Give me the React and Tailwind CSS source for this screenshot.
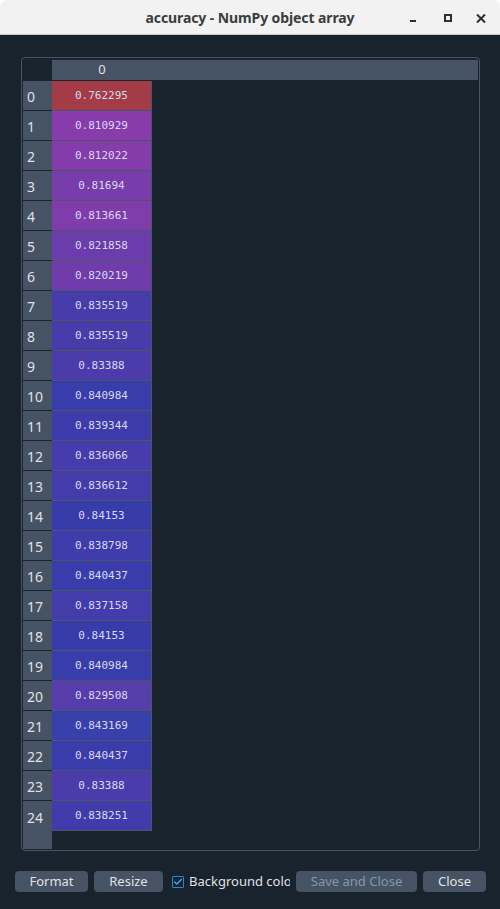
import { Check } from 'lucide-react'

const rows = [
  { value: '0.762295', bg: 'bg-[#a33c46]' },
  { value: '0.810929', bg: 'bg-[#883cab]' },
  { value: '0.812022', bg: 'bg-[#853cab]' },
  { value: '0.81694',  bg: 'bg-[#783cab]' },
  { value: '0.813661', bg: 'bg-[#813cab]' },
  { value: '0.821858', bg: 'bg-[#6b3cab]' },
  { value: '0.820219', bg: 'bg-[#703cab]' },
  { value: '0.835519', bg: 'bg-[#483cab]' },
  { value: '0.835519', bg: 'bg-[#483cab]' },
  { value: '0.83388',  bg: 'bg-[#4c3cab]' },
  { value: '0.840984', bg: 'bg-[#393cab]' },
  { value: '0.839344', bg: 'bg-[#3e3cab]' },
  { value: '0.836066', bg: 'bg-[#463cab]' },
  { value: '0.836612', bg: 'bg-[#453cab]' },
  { value: '0.84153',  bg: 'bg-[#383cab]' },
  { value: '0.838798', bg: 'bg-[#3f3cab]' },
  { value: '0.840437', bg: 'bg-[#3b3cab]' },
  { value: '0.837158', bg: 'bg-[#433cab]' },
  { value: '0.84153',  bg: 'bg-[#383cab]' },
  { value: '0.840984', bg: 'bg-[#393cab]' },
  { value: '0.829508', bg: 'bg-[#573cab]' },
  { value: '0.843169', bg: 'bg-[#3840ab]' },
  { value: '0.840437', bg: 'bg-[#3b3cab]' },
  { value: '0.83388',  bg: 'bg-[#4c3cab]' },
  { value: '0.838251', bg: 'bg-[#403cab]' },
]

function TitleBar() {
  return (
    <div className="relative h-[35px] bg-[#f2f2f2] rounded-t-[7px] border-b border-[#c9c9c6] flex items-center justify-center">
      <span className="text-[14px] font-bold text-[#3c3c3c] tracking-[-0.1px]">accuracy - NumPy object array</span>
      {/* window controls */}
      <div className="absolute right-[14px] top-[14px] flex items-start text-[#2e2e2e]">
        <svg width="6" height="10" viewBox="0 0 6 10" className="mr-[28px]">
          <rect x="0" y="6" width="6" height="2" fill="currentColor" />
        </svg>
        <svg width="8" height="8" viewBox="0 0 8 8" className="mr-[24px]">
          <rect x="1" y="1" width="6" height="6" fill="none" stroke="currentColor" strokeWidth="2" />
        </svg>
        <svg width="10" height="9" viewBox="0 0 10 9">
          <path d="M1 0.5 L9 8.5 M9 0.5 L1 8.5" stroke="currentColor" strokeWidth="2" />
        </svg>
      </div>
    </div>
  )
}

function Btn({ children, w, disabled }) {
  return (
    <button
      className={`${w} h-[21px] rounded-[4px] bg-[#455364] text-[13px] leading-none shrink-0 ${
        disabled ? 'text-[#8797a6]' : 'text-[#e0e1e3]'
      }`}
    >
      {children}
    </button>
  )
}

export default function App() {
  return (
    <div className="w-[500px] h-[909px] flex flex-col bg-white font-['Noto_Sans',sans-serif]">
      <TitleBar />

      <div className="flex-1 bg-[#19232d] flex flex-col">
        {/* Table frame */}
        <div className="ml-[21px] mr-[20px] mt-[22px] h-[794px] border border-[#455364] rounded-[4px] pt-[2px] px-[1px] pb-[1px] flex">
          {/* row headers */}
          <div className="w-[29px] flex flex-col">
            <div className="h-[21px] shrink-0" />
            {rows.map((r, i) => (
              <div
                key={i}
                className={`h-[30px] shrink-0 bg-[#455364] pl-[4px] pt-[2px] flex items-center text-[14px] text-[#e0e1e3] ${
                  i < rows.length - 1 ? 'border-b border-[#19232d]' : ''
                }`}
              >
                {i}
              </div>
            ))}
            <div className="flex-1 bg-[#455364]" />
          </div>

          {/* data column */}
          <div className="flex-1 flex flex-col">
            <div className="h-[20px] bg-[#455364] flex items-center">
              <span className="w-[100px] text-center text-[13px] text-[#e0e1e3]">0</span>
            </div>
            <div className="h-[1px]" />
            {rows.map((r, i) => (
              <div key={i} className={`w-[100px] h-[30px] shrink-0 ${r.bg} border-b border-r border-[#4b5563] flex justify-center pt-[7px] font-['DejaVu_Sans_Mono',monospace] text-[11px] text-[#d6daf2]`}>
                {r.value}
              </div>
            ))}
          </div>
        </div>

        {/* Bottom buttons */}
        <div className="mt-[20px] pl-[15px] flex items-center">
          <Btn w="w-[73px]">Format</Btn>
          <div className="w-[6px]" />
          <Btn w="w-[69px]">Resize</Btn>
          <div className="w-[9px]" />
          {/* label is clipped by its box, as in the original dialog */}
          <div className="w-[118px] shrink-0 flex items-center overflow-hidden whitespace-nowrap">
            <span className="w-[12px] h-[12px] shrink-0 border border-[#1f8ad2] rounded-[1px] flex items-center justify-center">
              <Check size={10} strokeWidth={3} className="text-[#5fb0e8]" />
            </span>
            <span className="ml-[5px] text-[13px] text-[#e0e1e3]">Background color</span>
          </div>
          <div className="w-[6px]" />
          <Btn w="w-[121px]" disabled>Save and Close</Btn>
          <div className="w-[6px]" />
          <Btn w="w-[63px]">Close</Btn>
        </div>
      </div>
    </div>
  )
}
